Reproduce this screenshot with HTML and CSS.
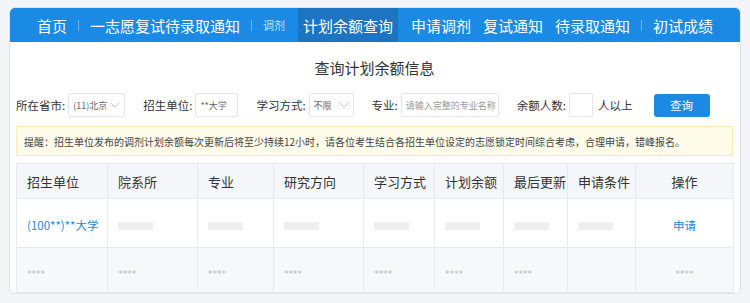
FILE: index.html
```html
<!DOCTYPE html>
<html lang="zh-CN">
<head>
    <meta charset="UTF-8">
    <meta name="viewport" content="width=device-width, initial-scale=1.0">
    <title>查询计划余额信息</title>
    <link rel="stylesheet" href="styles.css">
</head>
<body>
    <div class="panel">
        <nav class="nav">
            <a class="nav-item">首页</a>
            <span class="nav-sep"></span>
            <a class="nav-item">一志愿复试待录取通知</a>
            <span class="nav-sep"></span>
            <a class="nav-item nav-small">调剂</a>
            <a class="nav-item active">计划余额查询</a>
            <a class="nav-item">申请调剂</a>
            <a class="nav-item">复试通知</a>
            <a class="nav-item">待录取通知</a>
            <span class="nav-sep"></span>
            <a class="nav-item">初试成绩</a>
        </nav>

        <div class="content">
            <h2 class="title">查询计划余额信息</h2>

            <div class="search">
                <div class="field">
                    <label>所在省市:</label>
                    <div class="select w-province">
                        <span>(11)北京</span>
                        <svg class="chev" width="10" height="6" viewBox="0 0 10 6"><path d="M0.5 0.5 L5 5 L9.5 0.5" fill="none" stroke="#c6cad1" stroke-width="1"/></svg>
                    </div>
                </div>
                <div class="field">
                    <label>招生单位:</label>
                    <div class="input w-school">**大学</div>
                </div>
                <div class="field">
                    <label>学习方式:</label>
                    <div class="select w-mode">
                        <span>不限</span>
                        <svg class="chev" width="10" height="6" viewBox="0 0 10 6"><path d="M0.5 0.5 L5 5 L9.5 0.5" fill="none" stroke="#c6cad1" stroke-width="1"/></svg>
                    </div>
                </div>
                <div class="field">
                    <label>专业:</label>
                    <div class="input w-major placeholder">请输入完整的专业名称</div>
                </div>
                <div class="field">
                    <label>余额人数:</label>
                    <div class="input w-count"></div>
                    <span class="suffix">人以上</span>
                </div>
                <button class="btn">查询</button>
            </div>

            <div class="notice">提醒：招生单位发布的调剂计划余额每次更新后将至少持续12小时，请各位考生结合各招生单位设定的志愿锁定时间综合考虑，合理申请，错峰报名。</div>

            <table class="plan-table">
                <colgroup>
                    <col style="width:91px"><col style="width:90px"><col style="width:76px">
                    <col style="width:90px"><col style="width:71px"><col style="width:69px">
                    <col style="width:64px"><col style="width:68px"><col style="width:98px">
                </colgroup>
                <thead>
                    <tr>
                        <th>招生单位</th>
                        <th>院系所</th>
                        <th>专业</th>
                        <th>研究方向</th>
                        <th>学习方式</th>
                        <th>计划余额</th>
                        <th>最后更新</th>
                        <th>申请条件</th>
                        <th class="center">操作</th>
                    </tr>
                </thead>
                <tbody>
                    <tr class="row-main">
                        <td><a class="link">(100**)**大学</a></td>
                        <td><span class="blur"></span></td>
                        <td><span class="blur"></span></td>
                        <td><span class="blur"></span></td>
                        <td><span class="blur"></span></td>
                        <td><span class="blur"></span></td>
                        <td><span class="blur"></span></td>
                        <td><span class="blur"></span></td>
                        <td class="center"><a class="link">申请</a></td>
                    </tr>
                    <tr class="row-mask">
                        <td><span class="mask">****</span></td>
                        <td><span class="mask">****</span></td>
                        <td><span class="mask">****</span></td>
                        <td><span class="mask">****</span></td>
                        <td><span class="mask">****</span></td>
                        <td><span class="mask">****</span></td>
                        <td><span class="mask">****</span></td>
                        <td></td>
                        <td class="center"><span class="mask">****</span></td>
                    </tr>
                </tbody>
            </table>
        </div>
    </div>
</body>
</html>
```

FILE: styles.css
```css
:root {
    --blue: #1a8ae4;
    --blue-dark: #1d74c2;
    --border: #e6e9ef;
    --text: #333;
}

body {
    margin: 0;
    padding: 7px 9px 0 9px;
    background-color: #f3f5f9;
    font-family: "Noto Sans CJK SC", "Noto Sans", sans-serif;
    color: var(--text);
}

.panel {
    background-color: #fff;
    border: 1px solid #dfe2e8;
    border-radius: 6px;
    overflow: hidden;
}

/* top navigation */
.nav {
    display: flex;
    align-items: center;
    height: 34px;
    padding-left: 21px;
    background-color: var(--blue);
}

.nav-item {
    display: flex;
    align-items: center;
    height: 100%;
    padding: 0 6px;
    color: #fff;
    font-size: 15px;
    white-space: nowrap;
}

.nav-small {
    font-size: 11px;
    color: rgba(255,255,255,0.75);
}

.nav-item.active {
    background-color: var(--blue-dark);
    margin: 0 7px 0 7px;
    padding: 0 5px;
}

.nav-sep {
    width: 1px;
    height: 11px;
    margin: 0 5px;
    background-color: rgba(255,255,255,0.35);
}

.content {
    padding: 0 7px 0 6px;
}

.title {
    margin: 16px 0 15px;
    font-size: 15px;
    line-height: 20px;
    font-weight: normal;
    text-align: center;
    color: #333;
}

/* search form */
.search {
    display: flex;
    align-items: center;
    height: 24px;
}

.field {
    display: flex;
    align-items: center;
    margin-right: 18px;
}

.field label {
    font-size: 11.5px;
    margin-right: 3px;
    white-space: nowrap;
}

.select, .input {
    box-sizing: border-box;
    display: flex;
    align-items: center;
    height: 24px;
    padding: 0 4px;
    border: 1px solid #e3e6eb;
    border-radius: 2px;
    font-size: 9px;
    color: #666;
    white-space: nowrap;
    overflow: hidden;
}

.select {
    justify-content: space-between;
}

.chev {
    flex: none;
}

.w-province { width: 57px; }
.w-school { width: 43px; }
.w-mode { width: 45px; }
.w-major { width: 98px; }
.w-count { width: 24px; }

.placeholder {
    color: #999;
}

.suffix {
    font-size: 11.5px;
    margin-left: 5px;
}

.btn {
    width: 56px;
    height: 23px;
    margin-left: 3px;
    border: none;
    border-radius: 3px;
    background-color: var(--blue);
    color: #fff;
    font-family: inherit;
    font-size: 11.5px;
}

/* notice bar */
.notice {
    box-sizing: border-box;
    height: 30px;
    margin-top: 9px;
    padding: 0 7px;
    display: flex;
    align-items: center;
    background-color: #fffbeb;
    border: 1px solid #fbeab9;
    font-size: 10px;
    color: #444;
    white-space: nowrap;
}

/* result table */
.plan-table {
    width: 717px;
    margin-top: 7px;
    border-collapse: collapse;
    table-layout: fixed;
}

.plan-table th,
.plan-table td {
    border: 1px solid var(--border);
    padding: 0 0 0 10px;
    text-align: left;
    white-space: nowrap;
}

.plan-table th {
    height: 34px;
    background-color: #f5f6f9;
    font-size: 13px;
    font-weight: normal;
    color: #333;
}

.plan-table .center {
    text-align: center;
    padding: 0;
}

.row-main td {
    height: 48px;
}

.row-mask td {
    height: 44px;
    background-color: #f7f8fa;
}

.mask {
    display: inline-block;
    font-family: "DejaVu Sans", sans-serif;
    font-size: 9px;
    line-height: 9px;
    padding-top: 4px;
    color: #b4b8bf;
}

.link {
    color: var(--blue);
    font-size: 11.5px;
}

.blur {
    display: inline-block;
    width: 35px;
    height: 8px;
    vertical-align: middle;
    background-color: #efefef;
}
```
